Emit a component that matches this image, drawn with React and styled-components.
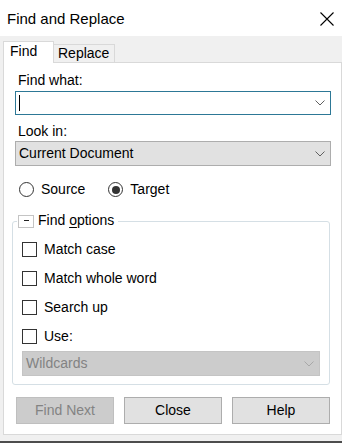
import React from 'react';
import styled, {createGlobalStyle} from 'styled-components';

const GlobalStyle = createGlobalStyle`
  body {
    margin: 0;
    font-family: "Liberation Sans", Arial, sans-serif;
    font-size: 14px;
    color: #000;
  }
`

const Window = styled.div`
  box-sizing: border-box;
  width: 342px;
  height: 443px;
  background: #f0f0f0;
  border-bottom: 2px solid #4d4d4d;
  display: flex;
  flex-direction: column;
  overflow: hidden;
`

const TitleBar = styled.div`
  flex: none;
  height: 36px;
  background: #fff;
  display: flex;
  align-items: center;
  justify-content: space-between;
  box-sizing: border-box;
  padding: 2px 8px 0 7px;
  font-size: 15px;
  line-height: 18px;
`

const TabStrip = styled.div`
  flex: none;
  height: 26px;
  display: flex;
  align-items: flex-end;
  padding-left: 3px;
`

const Tab = styled.div`
  box-sizing: border-box;
  height: ${p => p.$active ? '22px' : '18px'};
  margin-bottom: ${p => p.$active ? '-1px' : '0'};
  padding: ${p => p.$active ? '1px 0 0 6px' : '0 0 0 4px'};
  width: ${p => p.$active ? '51px' : '61px'};
  border: 1px solid #d9d9d9;
  border-bottom: none;
  border-left: ${p => p.$active ? '1px solid #d9d9d9' : 'none'};
  background: ${p => p.$active ? '#fff' : '#f0f0f0'};
  line-height: 17px;
  position: relative;
  z-index: ${p => p.$active ? 1 : 0};
`

const Panel = styled.div`
  flex: none;
  box-sizing: border-box;
  width: 339px;
  height: 373px;
  margin-left: 3px;
  background: #fff;
  border: 1px solid #d9d9d9;
  padding: 9px 0 0 11px;
  display: flex;
  flex-direction: column;
`

const Label = styled.div`
  line-height: 17px;
  padding-left: 3px;
  margin-top: ${p => p.$top || 0}px;
`

const Combo = styled.div`
  box-sizing: border-box;
  width: ${p => p.$width || 316}px;
  height: ${p => p.$height || 25}px;
  margin-top: ${p => p.$top || 0}px;
  margin-left: ${p => p.$left || 0}px;
  border: 1px solid ${p => p.$focus ? '#2d7896' : p.$disabled ? '#c4c4c4' : '#adadad'};
  background: ${p => p.$focus ? '#fff' : p.$disabled ? '#cccccc' : '#e1e1e1'};
  color: ${p => p.$disabled ? '#838383' : '#000'};
  display: flex;
  align-items: center;
  justify-content: space-between;
  padding: 0 5px 0 3px;
  line-height: 17px;
`

const Caret = styled.span`
  display: block;
  width: 1px;
  height: 16px;
  background: #000;
`

const RadioRow = styled.div`
  display: flex;
  align-items: center;
  height: 17px;
  margin-top: 15px;
  padding-left: 4px;
`

const RadioOption = styled.label`
  display: flex;
  align-items: center;
  gap: 7px;
  margin-right: ${p => p.$gap || 0}px;
  line-height: 17px;
`

const RadioCircle = styled.span`
  flex: none;
  box-sizing: border-box;
  width: 15px;
  height: 15px;
  border-radius: 50%;
  border: 1px solid #333;
  display: flex;
  align-items: center;
  justify-content: center;

  &::after {
    content: '';
    display: ${p => p.$checked ? 'block' : 'none'};
    width: 8px;
    height: 8px;
    border-radius: 50%;
    background: #333;
  }
`

const Group = styled.fieldset`
  box-sizing: border-box;
  width: 318px;
  margin: 14px 0 0 -3px;
  min-inline-size: 0;
  padding: 4px 9px 8px 4px;
  border: 1px solid #d5dfe5;
  border-radius: 3px;
`

const Legend = styled.legend`
  display: flex;
  align-items: flex-start;
  padding: 0 4px 2px 1px;
  line-height: 17px;

  u {
    text-decoration-thickness: 1px;
    text-underline-offset: 2px;
  }
`

const Toggle = styled.span`
  flex: none;
  display: block;
  box-sizing: border-box;
  width: 16px;
  height: 13px;
  margin: 3px 4px 0 0;
  border: 1px solid #c4c4c4;
  position: relative;

  &::after {
    content: '';
    position: absolute;
    left: 5px;
    top: 4px;
    width: 5px;
    height: 1px;
    background: #222;
  }
`

const CheckRow = styled.label`
  display: flex;
  align-items: center;
  gap: 7px;
  height: 29px;
  margin-left: 5px;
  line-height: 17px;
`

const CheckBox = styled.span`
  flex: none;
  box-sizing: border-box;
  width: 15px;
  height: 15px;
  border: 1px solid #333;
  background: #fff;
`

const ButtonRow = styled.div`
  display: flex;
  gap: 10px;
  margin: 12px 0 0 1px;
`

const Button = styled.button`
  box-sizing: border-box;
  width: 98px;
  height: 27px;
  padding: 0;
  font-family: inherit;
  font-size: 14px;
  line-height: 17px;
  border: 1px solid ${p => p.disabled ? '#bfbfbf' : '#adadad'};
  background: ${p => p.disabled ? '#cccccc' : '#e1e1e1'};
  color: ${p => p.disabled ? '#838383' : '#000'};
`

const Chevron = ({color = '#606060'}) => (
    <svg width="10" height="6" viewBox="0 0 10 6">
        <polyline points="0.5,0.5 5,5 9.5,0.5" fill="none" stroke={color} strokeWidth="1"/>
    </svg>
)

const CloseIcon = () => (
    <svg width="14" height="14" viewBox="0 0 14 14">
        <path d="M0.5 0.5 L13.5 13.5 M13.5 0.5 L0.5 13.5" stroke="#000" strokeWidth="1.1" fill="none"/>
    </svg>
)

const options = ['Match case', 'Match whole word', 'Search up', 'Use:']

const App = () => {
    return (
        <Window>
            <GlobalStyle/>
            <TitleBar>
                <span>Find and Replace</span>
                <CloseIcon/>
            </TitleBar>
            <TabStrip>
                <Tab $active>Find</Tab>
                <Tab>Replace</Tab>
            </TabStrip>
            <Panel>
                <Label>Find what:</Label>
                <Combo $focus $height={24} $top={2}>
                    <Caret/>
                    <Chevron/>
                </Combo>
                <Label $top={8}>Look in:</Label>
                <Combo $top={1}>
                    <span>Current Document</span>
                    <Chevron/>
                </Combo>
                <RadioRow>
                    <RadioOption $gap={23}>
                        <RadioCircle/>
                        Source
                    </RadioOption>
                    <RadioOption>
                        <RadioCircle $checked/>
                        Target
                    </RadioOption>
                </RadioRow>
                <Group>
                    <Legend>
                        <Toggle/>
                        <span>Find <u>o</u>ptions</span>
                    </Legend>
                    {options.map(o => (
                        <CheckRow key={o}>
                            <CheckBox/>
                            {o}
                        </CheckRow>
                    ))}
                    <Combo $disabled $width={298} $left={5}>
                        <span>Wildcards</span>
                        <Chevron color="#a8a8a8"/>
                    </Combo>
                </Group>
                <ButtonRow>
                    <Button disabled>Find Next</Button>
                    <Button>Close</Button>
                    <Button>Help</Button>
                </ButtonRow>
            </Panel>
        </Window>
    );
};

export default App;
